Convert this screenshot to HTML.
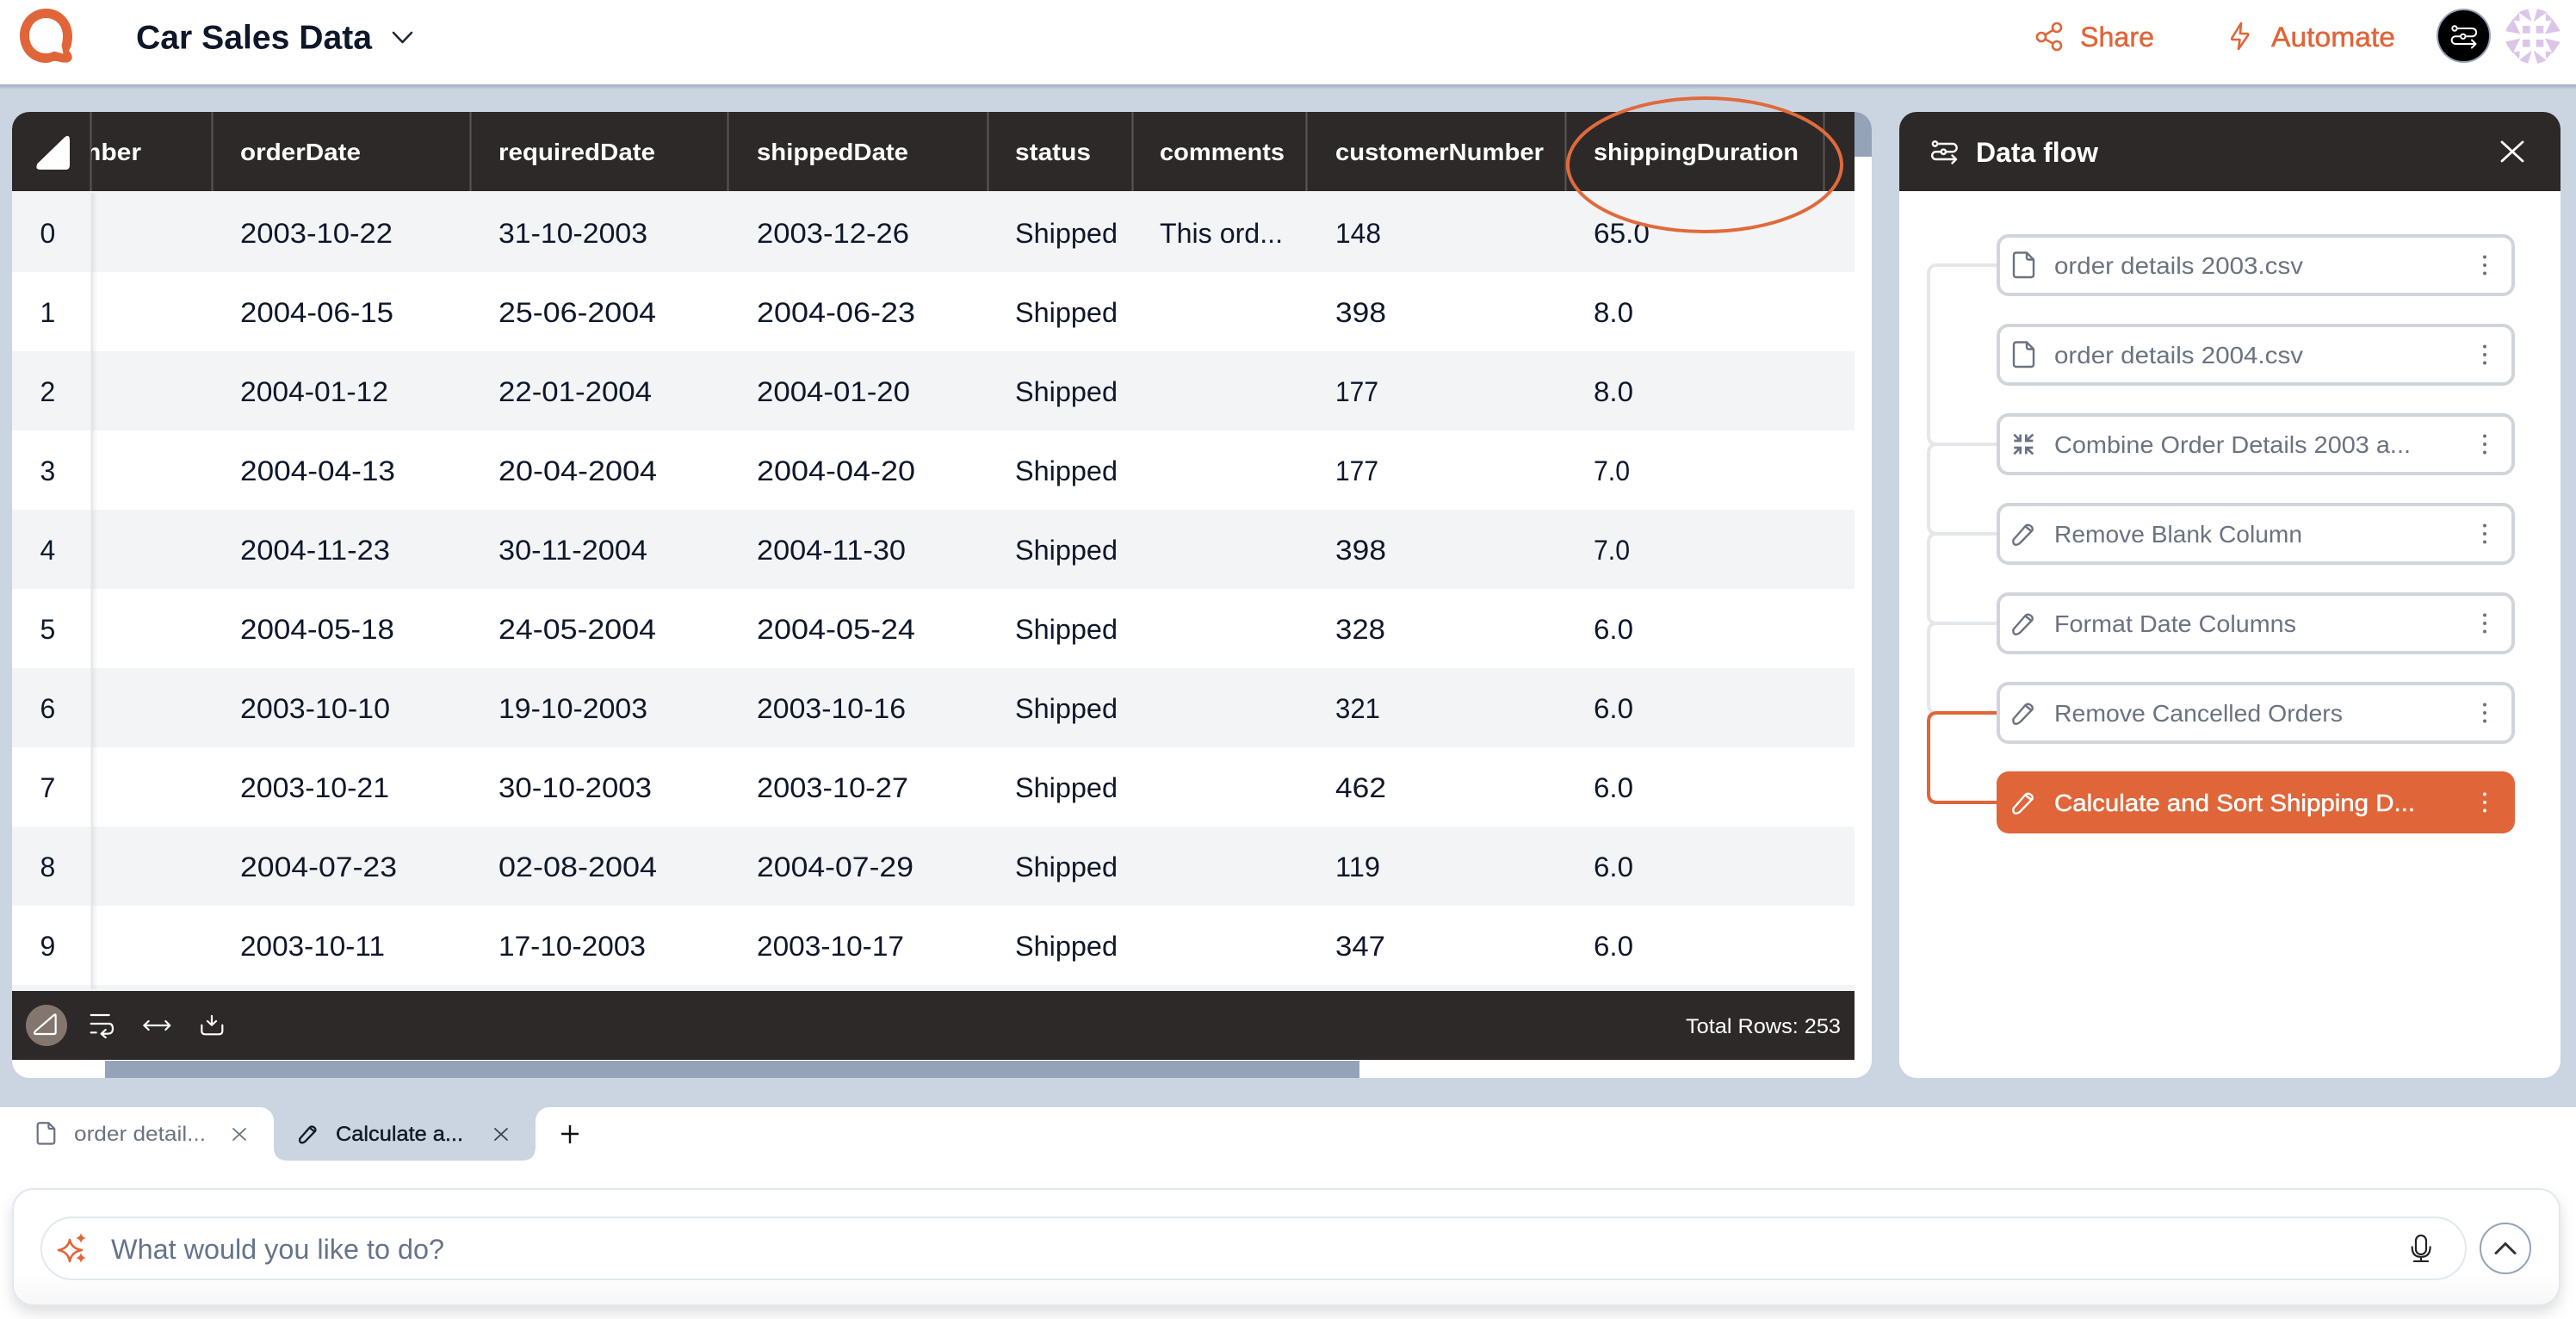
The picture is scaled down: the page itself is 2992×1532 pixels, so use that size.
<!DOCTYPE html>
<html lang="en">
<head>
<meta charset="utf-8">
<title>Car Sales Data</title>
<style>
html,body{margin:0;padding:0;background:#fff;width:2992px;height:1532px;overflow:hidden}
svg{display:block;font-family:"Liberation Sans",Arial,sans-serif}
.r text{font-size:32px;fill:#0f172a}
.h text{font-size:28px;font-weight:700;fill:#fff}
.n{font-size:28px;fill:#6b7280}
.i{fill:none;stroke-linecap:round;stroke-linejoin:round}
</style>
</head>
<body>
<svg xmlns="http://www.w3.org/2000/svg" width="2992" height="1532" viewBox="0 0 2992 1532">
<defs>
<linearGradient id="hs" x1="0" y1="0" x2="0" y2="1"><stop offset="0" stop-color="#94a3b8" stop-opacity=".75"/><stop offset="1" stop-color="#cbd5e1"/></linearGradient>
<linearGradient id="cg" x1="0" y1="0" x2="0" y2="1"><stop offset="0" stop-color="#fff"/><stop offset=".7" stop-color="#fff"/><stop offset="1" stop-color="#f7f7f8"/></linearGradient>
<linearGradient id="cs" x1="0" y1="0" x2="1" y2="0"><stop offset="0" stop-color="#000" stop-opacity=".06"/><stop offset="1" stop-color="#000" stop-opacity="0"/></linearGradient>
<clipPath id="pc"><rect x="14" y="130" width="2160" height="1122" rx="20"/></clipPath>
<clipPath id="pd"><rect x="2206" y="130" width="768" height="1122" rx="20"/></clipPath>
<clipPath id="hc"><rect x="106" y="130" width="140" height="92"/></clipPath>
<clipPath id="av"><circle cx="2942" cy="42" r="32"/></clipPath>
<g id="pencil"><path d="M1.5 19 L15.5 3 Q18 .8 21 2.5 Q24.5 4.5 23.5 8 L9.5 22.5 Q6 25.5 3 24.5 Q.8 23 1.5 19 Z M15.5 3.5 L22.5 9"/></g>
<g id="file"><path d="M5 1.5 H17 L25 9.5 V27 Q25 30 22 30 H5 Q2 30 2 27 V4.5 Q2 1.5 5 1.5 Z M17 1.5 V7 Q17 9.5 19.5 9.5 H25"/></g>
<g id="flow"><circle cx="12.5" cy="12" r="2.7"/><circle cx="22.3" cy="21.3" r="2.7"/><path d="M15.2 12 H33 a4.3 4.3 0 0 1 0 9.3 H25 M19.6 21.3 H13.5 a4.3 4.3 0 0 0 0 8.7 H37 M32.5 25.5 L37 30 L32.5 34.5"/></g>
<g id="kebab"><circle cx="2886" cy="-9.500" r="2"/><circle cx="2886" cy="0" r="2"/><circle cx="2886" cy="9.500" r="2"/></g>
</defs>

<!-- page bg -->
<rect width="2992" height="1532" fill="#cbd5e1"/>
<rect y="98" width="2992" height="6" fill="url(#hs)"/>
<rect width="2992" height="98" fill="#fff"/>

<!-- top bar -->
<path fill="#e06538" fill-rule="evenodd" d="M53.5 10 C71 10 84 24 84 42 C84 49 82.5 55 80 59 C85 64 85.5 71 78 72.5 C72 73.5 66 70 62 71 C59 72 56 73 53.5 73 C36 73 23 59 23 41.5 C23 24 36 10 53.5 10 Z M53.5 21 C42 21 34 30 34 41.5 C34 53 42 62 53.5 62 C57 62 60 61 63 59.5 L73.5 62.5 L71.5 52 C72.8 48.5 73 45 73 41.5 C73 30 65 21 53.5 21 Z"/>
<text x="158" y="56.500" font-size="39" font-weight="700" fill="#0f172a" textLength="274" lengthAdjust="spacingAndGlyphs">Car Sales Data</text>
<path class="i" stroke="#1f2937" stroke-width="2.6" d="M457 38 L467.5 49 L478 38"/>

<g class="i" stroke="#e06538" stroke-width="2.6"><circle cx="2389" cy="32" r="5"/><circle cx="2371" cy="43" r="5"/><circle cx="2389" cy="53" r="5"/><path d="M2375.5 40.5 L2384.5 35 M2375.5 45.5 L2384.5 50.5"/></g>
<text x="2416" y="54" font-size="32" fill="#e06538" stroke="#e06538" stroke-width=".5" textLength="86" lengthAdjust="spacingAndGlyphs">Share</text>
<path class="i" stroke="#e06538" stroke-width="2.6" d="M2603 27 L2592.5 44 Q2591.5 46 2593.5 46 H2601.5 L2600 57 L2611 41 Q2612 39 2610 39 H2602 Z"/>
<text x="2638" y="54" font-size="32" fill="#e06538" stroke="#e06538" stroke-width=".5" textLength="144" lengthAdjust="spacingAndGlyphs">Automate</text>

<circle cx="2861.5" cy="41.5" r="30.5" fill="#000" stroke="#94a3b8" stroke-width="2"/>
<use href="#flow" transform="translate(2838.5,21)" class="i" stroke="#fff" stroke-width="2"/>

<g clip-path="url(#av)" fill="#dbc6e8">
<g transform="translate(2820,0) scale(.3333)">
<rect x="330" y="90" width="26" height="26"/><rect x="377" y="90" width="26" height="26"/><rect x="330" y="138" width="26" height="26"/><rect x="377" y="138" width="26" height="26"/>
<path d="M312 40 L348 28 L362 76 Z M418 40 L382 28 L368 76 Z M312 214 L348 224 L362 175 Z M418 214 L382 224 L368 175 Z"/>
<path d="M268 108 L296 66 L322 118 Z M462 108 L434 66 L408 118 Z M268 146 L296 186 L322 134 Z M462 146 L434 186 L408 134 Z"/>
<path d="M294 70 L318 44 L320 74 Z M436 70 L412 44 L410 74 Z M296 182 L318 206 L320 178 Z M434 182 L412 206 L410 178 Z"/>
</g>
</g>

<!-- table panel -->
<rect x="14" y="130" width="2160" height="1122" rx="20" fill="#fff"/>
<g clip-path="url(#pc)">
<rect x="2154" y="130" width="20" height="52" fill="#94a3b8"/>
<rect x="14" y="222" width="2140" height="94" fill="#f3f4f6"/>
<rect x="14" y="408" width="2140" height="92" fill="#f3f4f6"/>
<rect x="14" y="592" width="2140" height="92" fill="#f3f4f6"/>
<rect x="14" y="776" width="2140" height="92" fill="#f3f4f6"/>
<rect x="14" y="960" width="2140" height="92" fill="#f3f4f6"/>
<rect x="14" y="1144" width="2140" height="7" fill="#f3f4f6"/>
<rect x="14" y="130" width="2140" height="92" fill="#2d2928"/>
<rect x="14" y="1151" width="2140" height="80" fill="#2d2928"/>
<rect x="122" y="1232" width="1457" height="20" fill="#94a3b8"/>
</g>
<rect x="105.500" y="224" width="2" height="925" fill="#e2e5ea"/>
<rect x="107.500" y="224" width="6" height="925" fill="url(#cs)"/>

<g fill="#5a5655">
<rect x="104.500" y="130" width="2" height="92"/><rect x="245.500" y="130" width="2" height="92"/><rect x="545.500" y="130" width="2" height="92"/><rect x="844.500" y="130" width="2" height="92"/><rect x="1146.500" y="130" width="2" height="92"/><rect x="1314.500" y="130" width="2" height="92"/><rect x="1516.500" y="130" width="2" height="92"/><rect x="1817.500" y="130" width="2" height="92"/><rect x="2117.500" y="130" width="2" height="92"/>
</g>
<path fill="#fff" d="M75 159.500 Q81 155 81 163 V192 Q81 197 76 197 H47 Q40 197 43.500 190 Z"/>

<g class="h">
<text x="-26" y="186" textLength="190" lengthAdjust="spacingAndGlyphs" clip-path="url(#hc)">orderNumber</text>
<text x="279" y="186" textLength="140" lengthAdjust="spacingAndGlyphs">orderDate</text>
<text x="579" y="186" textLength="182" lengthAdjust="spacingAndGlyphs">requiredDate</text>
<text x="879" y="186" textLength="176" lengthAdjust="spacingAndGlyphs">shippedDate</text>
<text x="1179" y="186" textLength="88" lengthAdjust="spacingAndGlyphs">status</text>
<text x="1347" y="186" textLength="145" lengthAdjust="spacingAndGlyphs">comments</text>
<text x="1551" y="186" textLength="242" lengthAdjust="spacingAndGlyphs">customerNumber</text>
<text x="1851" y="186" textLength="238" lengthAdjust="spacingAndGlyphs">shippingDuration</text>
</g>

<g class="r">
<g><text x="46.500" y="282">0</text><text x="279" y="282" textLength="177" lengthAdjust="spacingAndGlyphs">2003-10-22</text><text x="579" y="282" textLength="173" lengthAdjust="spacingAndGlyphs">31-10-2003</text><text x="879" y="282" textLength="177" lengthAdjust="spacingAndGlyphs">2003-12-26</text><text x="1179" y="282" textLength="119" lengthAdjust="spacingAndGlyphs">Shipped</text><text x="1347" y="282" textLength="143" lengthAdjust="spacingAndGlyphs">This ord...</text><text x="1551" y="282" textLength="53" lengthAdjust="spacingAndGlyphs">148</text><text x="1851" y="282" textLength="65" lengthAdjust="spacingAndGlyphs">65.0</text></g>
<g transform="translate(0,92)"><text x="46.500" y="282">1</text><text x="279" y="282" textLength="178" lengthAdjust="spacingAndGlyphs">2004-06-15</text><text x="579" y="282" textLength="183" lengthAdjust="spacingAndGlyphs">25-06-2004</text><text x="879" y="282" textLength="184" lengthAdjust="spacingAndGlyphs">2004-06-23</text><text x="1179" y="282" textLength="119" lengthAdjust="spacingAndGlyphs">Shipped</text><text x="1551" y="282" textLength="59" lengthAdjust="spacingAndGlyphs">398</text><text x="1851" y="282" textLength="46" lengthAdjust="spacingAndGlyphs">8.0</text></g>
<g transform="translate(0,184)"><text x="46.500" y="282">2</text><text x="279" y="282" textLength="172" lengthAdjust="spacingAndGlyphs">2004-01-12</text><text x="579" y="282" textLength="178" lengthAdjust="spacingAndGlyphs">22-01-2004</text><text x="879" y="282" textLength="178" lengthAdjust="spacingAndGlyphs">2004-01-20</text><text x="1179" y="282" textLength="119" lengthAdjust="spacingAndGlyphs">Shipped</text><text x="1551" y="282" textLength="50" lengthAdjust="spacingAndGlyphs">177</text><text x="1851" y="282" textLength="46" lengthAdjust="spacingAndGlyphs">8.0</text></g>
<g transform="translate(0,276)"><text x="46.500" y="282">3</text><text x="279" y="282" textLength="180" lengthAdjust="spacingAndGlyphs">2004-04-13</text><text x="579" y="282" textLength="184" lengthAdjust="spacingAndGlyphs">20-04-2004</text><text x="879" y="282" textLength="184" lengthAdjust="spacingAndGlyphs">2004-04-20</text><text x="1179" y="282" textLength="119" lengthAdjust="spacingAndGlyphs">Shipped</text><text x="1551" y="282" textLength="50" lengthAdjust="spacingAndGlyphs">177</text><text x="1851" y="282" textLength="42" lengthAdjust="spacingAndGlyphs">7.0</text></g>
<g transform="translate(0,368)"><text x="46.500" y="282">4</text><text x="279" y="282" textLength="174" lengthAdjust="spacingAndGlyphs">2004-11-23</text><text x="579" y="282" textLength="173" lengthAdjust="spacingAndGlyphs">30-11-2004</text><text x="879" y="282" textLength="173" lengthAdjust="spacingAndGlyphs">2004-11-30</text><text x="1179" y="282" textLength="119" lengthAdjust="spacingAndGlyphs">Shipped</text><text x="1551" y="282" textLength="59" lengthAdjust="spacingAndGlyphs">398</text><text x="1851" y="282" textLength="42" lengthAdjust="spacingAndGlyphs">7.0</text></g>
<g transform="translate(0,460)"><text x="46.500" y="282">5</text><text x="279" y="282" textLength="179" lengthAdjust="spacingAndGlyphs">2004-05-18</text><text x="579" y="282" textLength="183" lengthAdjust="spacingAndGlyphs">24-05-2004</text><text x="879" y="282" textLength="184" lengthAdjust="spacingAndGlyphs">2004-05-24</text><text x="1179" y="282" textLength="119" lengthAdjust="spacingAndGlyphs">Shipped</text><text x="1551" y="282" textLength="58" lengthAdjust="spacingAndGlyphs">328</text><text x="1851" y="282" textLength="46" lengthAdjust="spacingAndGlyphs">6.0</text></g>
<g transform="translate(0,552)"><text x="46.500" y="282">6</text><text x="279" y="282" textLength="174" lengthAdjust="spacingAndGlyphs">2003-10-10</text><text x="579" y="282" textLength="173" lengthAdjust="spacingAndGlyphs">19-10-2003</text><text x="879" y="282" textLength="173" lengthAdjust="spacingAndGlyphs">2003-10-16</text><text x="1179" y="282" textLength="119" lengthAdjust="spacingAndGlyphs">Shipped</text><text x="1551" y="282" textLength="52" lengthAdjust="spacingAndGlyphs">321</text><text x="1851" y="282" textLength="46" lengthAdjust="spacingAndGlyphs">6.0</text></g>
<g transform="translate(0,644)"><text x="46.500" y="282">7</text><text x="279" y="282" textLength="173" lengthAdjust="spacingAndGlyphs">2003-10-21</text><text x="579" y="282" textLength="178" lengthAdjust="spacingAndGlyphs">30-10-2003</text><text x="879" y="282" textLength="176" lengthAdjust="spacingAndGlyphs">2003-10-27</text><text x="1179" y="282" textLength="119" lengthAdjust="spacingAndGlyphs">Shipped</text><text x="1551" y="282" textLength="59" lengthAdjust="spacingAndGlyphs">462</text><text x="1851" y="282" textLength="46" lengthAdjust="spacingAndGlyphs">6.0</text></g>
<g transform="translate(0,736)"><text x="46.500" y="282">8</text><text x="279" y="282" textLength="182" lengthAdjust="spacingAndGlyphs">2004-07-23</text><text x="579" y="282" textLength="184" lengthAdjust="spacingAndGlyphs">02-08-2004</text><text x="879" y="282" textLength="182" lengthAdjust="spacingAndGlyphs">2004-07-29</text><text x="1179" y="282" textLength="119" lengthAdjust="spacingAndGlyphs">Shipped</text><text x="1551" y="282" textLength="52" lengthAdjust="spacingAndGlyphs">119</text><text x="1851" y="282" textLength="46" lengthAdjust="spacingAndGlyphs">6.0</text></g>
<g transform="translate(0,828)"><text x="46.500" y="282">9</text><text x="279" y="282" textLength="168" lengthAdjust="spacingAndGlyphs">2003-10-11</text><text x="579" y="282" textLength="171" lengthAdjust="spacingAndGlyphs">17-10-2003</text><text x="879" y="282" textLength="171" lengthAdjust="spacingAndGlyphs">2003-10-17</text><text x="1179" y="282" textLength="119" lengthAdjust="spacingAndGlyphs">Shipped</text><text x="1551" y="282" textLength="58" lengthAdjust="spacingAndGlyphs">347</text><text x="1851" y="282" textLength="46" lengthAdjust="spacingAndGlyphs">6.0</text></g>
</g>

<!-- ellipse annotation -->
<ellipse cx="1980" cy="191.500" rx="159" ry="77.500" fill="none" stroke="#e06a3c" stroke-width="4"/>

<!-- table footer -->
<circle cx="54" cy="1191" r="24" fill="#83766f"/>
<g transform="translate(20,1160) scale(.3333)" class="i" stroke="#fff" stroke-width="6.500">
<path d="M128 57 L63 113 Q56 123 66 123 H128 Q134 123 134 117 V60 Q134 52 128 57 Z"/>
<path d="M257 57 H320 M257 87 H320 Q333 87 333 105 Q333 122 315 122 H295 M308 108 L293 122 L308 135 M257 118 H275"/>
<path d="M442 93 H532 M458 78 L442 93 L458 108 M517 78 L532 93 L517 108"/>
<path d="M643 92 V113 Q643 124 655 124 H703 Q715 124 715 113 V92 M678 60 V90 M663 78 L678 92 L693 78"/>
</g>
<text x="1958" y="1200" font-size="24" fill="#fff" textLength="180" lengthAdjust="spacingAndGlyphs">Total Rows: 253</text>

<!-- data flow panel -->
<rect x="2206" y="130" width="768" height="1122" rx="20" fill="#fff"/>
<rect x="2206" y="130" width="768" height="92" fill="#2d2928" clip-path="url(#pd)"/>
<use href="#flow" transform="translate(2235,155)" class="i" stroke="#fff" stroke-width="2.400"/>
<text x="2295" y="188" font-size="32" font-weight="700" fill="#fff" textLength="142" lengthAdjust="spacingAndGlyphs">Data flow</text>
<path class="i" stroke="#fff" stroke-width="2.800" d="M2906 165 L2930 187 M2930 165 L2906 187"/>

<g class="i" stroke="#e5e7eb" stroke-width="4" style="stroke-linecap:butt">
<path d="M2319 308 H2250 Q2240 308 2240 318 V506 Q2240 516 2250 516 H2319"/>
<path d="M2319 516 H2250 Q2240 516 2240 526 V610 Q2240 620 2250 620 H2319"/>
<path d="M2319 620 H2250 Q2240 620 2240 630 V714 Q2240 724 2250 724 H2319"/>
<path d="M2319 724 H2250 Q2240 724 2240 734 V818 Q2240 828 2250 828"/>
</g>
<path class="i" stroke="#e06538" stroke-width="4" style="stroke-linecap:butt" d="M2319 828 H2250 Q2240 828 2240 838 V922 Q2240 932 2250 932 H2319"/>

<g fill="#fff" stroke="#d1d5db" stroke-width="4">
<rect x="2321" y="274" width="598" height="68" rx="12"/>
<rect x="2321" y="378" width="598" height="68" rx="12"/>
<rect x="2321" y="482" width="598" height="68" rx="12"/>
<rect x="2321" y="586" width="598" height="68" rx="12"/>
<rect x="2321" y="690" width="598" height="68" rx="12"/>
<rect x="2321" y="794" width="598" height="68" rx="12"/>
</g>
<rect x="2319" y="896" width="602" height="72" rx="14" fill="#e06538"/>

<g class="i" stroke="#6b7280" stroke-width="2.400">
<use href="#file" transform="translate(2337,292)"/>
<use href="#file" transform="translate(2337,396)"/>
<use href="#pencil" transform="translate(2337,608)"/>
<use href="#pencil" transform="translate(2337,712)"/>
<use href="#pencil" transform="translate(2337,816)"/>
</g>
<use href="#pencil" transform="translate(2337,920)" class="i" stroke="#fff" stroke-width="2.400"/>
<g transform="translate(2330,490) scale(.3333)" class="i" stroke="#6b7280" stroke-width="8" style="stroke-linecap:butt;stroke-linejoin:miter">
<path d="M28 44 L48 64 M28 66 H50 V44 M94 44 L72 64 M70 44 V66 H94 M28 112 L48 92 M28 90 H50 V112 M94 112 L72 92 M70 112 V90 H94"/>
</g>

<g class="n">
<text x="2386" y="318" textLength="289" lengthAdjust="spacingAndGlyphs">order details 2003.csv</text>
<text x="2386" y="422" textLength="289" lengthAdjust="spacingAndGlyphs">order details 2004.csv</text>
<text x="2386" y="526" textLength="414" lengthAdjust="spacingAndGlyphs">Combine Order Details 2003 a...</text>
<text x="2386" y="630" textLength="288" lengthAdjust="spacingAndGlyphs">Remove Blank Column</text>
<text x="2386" y="734" textLength="281" lengthAdjust="spacingAndGlyphs">Format Date Columns</text>
<text x="2386" y="838" textLength="335" lengthAdjust="spacingAndGlyphs">Remove Cancelled Orders</text>
</g>
<text x="2386" y="942" font-size="28" fill="#fff" stroke="#fff" stroke-width=".5" textLength="419" lengthAdjust="spacingAndGlyphs">Calculate and Sort Shipping D...</text>

<g fill="#6b7280">
<use href="#kebab" transform="translate(0,308)"/><use href="#kebab" transform="translate(0,412)"/><use href="#kebab" transform="translate(0,516)"/><use href="#kebab" transform="translate(0,620)"/><use href="#kebab" transform="translate(0,724)"/><use href="#kebab" transform="translate(0,828)"/>
</g>
<use href="#kebab" transform="translate(0,932)" fill="#fff"/>

<!-- bottom area -->
<rect y="1310" width="2992" height="222" fill="#fff"/>
<rect x="-20" y="1286" width="338" height="60" rx="16" fill="#fff"/>
<rect x="622" y="1286" width="2400" height="60" rx="16" fill="#fff"/>
<path fill="#cbd5e1" d="M318 1286 H622 V1332 Q622 1348 606 1348 H334 Q318 1348 318 1332 Z"/>

<use href="#file" transform="translate(42,1303) scale(.85)" class="i" stroke="#6b7280" stroke-width="2.600"/>
<text x="86" y="1325" font-size="24" fill="#6b7280" textLength="153" lengthAdjust="spacingAndGlyphs">order detail...</text>
<path class="i" stroke="#6b7280" stroke-width="1.800" d="M271 1311 L285 1324 M285 1311 L271 1324"/>
<use href="#pencil" transform="translate(347,1307) scale(.82)" class="i" stroke="#111827" stroke-width="2.800"/>
<text x="390" y="1325" font-size="24" fill="#111827" stroke="#111827" stroke-width=".4" textLength="148" lengthAdjust="spacingAndGlyphs">Calculate a...</text>
<path class="i" stroke="#374151" stroke-width="1.800" d="M575 1311 L589 1324 M589 1311 L575 1324"/>
<path class="i" stroke="#111" stroke-width="2.400" style="stroke-linecap:butt" d="M652 1317 H672 M662 1307 V1328"/>

<rect x="15" y="1381" width="2958" height="135" rx="24" fill="url(#cg)" stroke="#e2e8f0" stroke-width="2" style="filter:drop-shadow(0 8px 8px rgba(0,0,0,.13))"/>
<rect x="48" y="1414" width="2816" height="72" rx="36" fill="#fff" stroke="#e2e8f0" stroke-width="2"/>
<path fill="none" stroke="#e06538" stroke-width="2.600" stroke-linejoin="round" d="M81 1440 Q83 1450 95 1452 Q83 1454 81 1465 Q79 1454 68 1452 Q79 1450 81 1440 Z"/>
<path fill="#e06538" d="M94 1432 Q95 1437 100 1438 Q95 1439 94 1444 Q93 1439 88 1438 Q93 1437 94 1432 Z M94 1455 Q95 1460 100 1461 Q95 1462 94 1467 Q93 1462 88 1461 Q93 1460 94 1455 Z"/>
<text x="129" y="1462" font-size="32" fill="#64748b" textLength="387" lengthAdjust="spacingAndGlyphs">What would you like to do?</text>
<g transform="translate(2600,1220) scale(.3333)" class="i" stroke="#222" stroke-width="6.500">
<rect x="618" y="645" width="36" height="66" rx="18"/>
<path d="M605 685 Q605 720 636 720 Q668 720 668 685 M636 720 V735 M612 735 H660"/>
</g>
<circle cx="2910" cy="1450" r="29" fill="#fff" stroke="#94a3b8" stroke-width="2"/>
<path class="i" stroke="#333" stroke-width="3" d="M2899 1455.500 L2910 1444.500 L2921 1455.500"/>
</svg>
</body>
</html>
